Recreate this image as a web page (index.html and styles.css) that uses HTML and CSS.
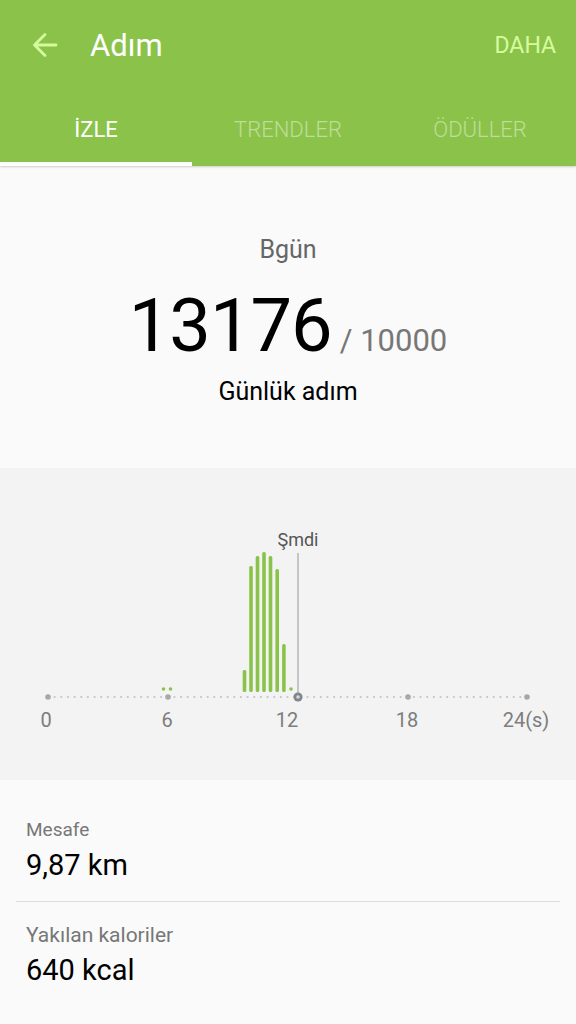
FILE: index.html
```html
<!DOCTYPE html>
<html lang="tr">
<head>
  <meta charset="UTF-8">
  <meta name="viewport" content="width=device-width, initial-scale=1.0">
  <title>Adım</title>
  <link rel="stylesheet" href="styles.css">
</head>
<body>

  <header class="appbar">
    <div class="titlebar">
      <svg class="back" width="28" height="28" viewBox="0 0 28 28">
        <path d="M25 14H4M14 3.5L3.5 14L14 24.5" fill="none" stroke="#d4fb9c" stroke-width="2.8" stroke-linecap="round" stroke-linejoin="round"/>
      </svg>
      <span class="title">Adım</span>
      <span class="more">DAHA</span>
    </div>
    <nav class="tabs">
      <div class="tab active">İZLE</div>
      <div class="tab">TRENDLER</div>
      <div class="tab">ÖDÜLLER</div>
    </nav>
  </header>

  <!-- Tagesziel -->
  <section class="summary">
    <div class="today">Bgün</div>
    <div class="count"><span class="steps">13176</span><span class="goal">/ 10000</span></div>
    <div class="label">Günlük adım</div>
  </section>

  <!-- Stundenverlauf -->
  <section class="chart">
    <svg width="576" height="312" viewBox="0 0 576 312">
      <line x1="48" y1="229" x2="527" y2="229" stroke="#c4c4c4" stroke-width="2.2" stroke-linecap="round" stroke-dasharray="0 6.653"/>
      <g fill="#a8a8a8">
        <circle cx="48" cy="229" r="2.8"/>
        <circle cx="168" cy="229" r="2.8"/>
        <circle cx="408" cy="229" r="2.8"/>
        <circle cx="527" cy="229" r="2.8"/>
      </g>
      <g fill="#8bc34a">
        <circle cx="163.5" cy="221" r="1.8"/>
        <circle cx="170.5" cy="221" r="1.8"/>
        <rect x="242.7" y="202" width="3.6" height="22" rx="1.5"/>
        <rect x="249.2" y="98" width="3.6" height="126" rx="1.5"/>
        <rect x="255.7" y="88" width="3.6" height="136" rx="1.5"/>
        <rect x="262.2" y="84" width="3.6" height="140" rx="1.5"/>
        <rect x="268.7" y="88" width="3.6" height="136" rx="1.5"/>
        <rect x="275.4" y="101" width="3.6" height="123" rx="1.5"/>
        <rect x="282.1" y="176" width="3.6" height="48" rx="1.5"/>
        <circle cx="291" cy="221" r="1.8"/>
      </g>
      <line x1="298" y1="85" x2="298" y2="229" stroke="#a9adb1" stroke-width="1.3"/>
      <circle cx="298" cy="229" r="4.6" fill="#7f878e"/>
      <circle cx="298" cy="229" r="1.8" fill="#d5d8da"/>
      <text x="298" y="78" class="now">Şmdi</text>
      <g class="axis">
        <text x="46" y="259">0</text>
        <text x="167" y="259">6</text>
        <text x="287" y="259">12</text>
        <text x="407" y="259">18</text>
        <text x="526" y="259">24(s)</text>
      </g>
    </svg>
  </section>

  <!-- Details -->
  <section class="details">
    <div class="item">
      <div class="item-label">Mesafe</div>
      <div class="item-value">9,87 km</div>
    </div>
    <div class="item">
      <div class="item-label wide">Yakılan kaloriler</div>
      <div class="item-value">640 kcal</div>
    </div>
  </section>

</body>
</html>
```

FILE: styles.css
```css
body {
  margin: 0;
  background-color: #fafafa;
  font-family: Roboto, "Noto Sans", sans-serif;
  color: #000;
}

.appbar {
  background: #8bc34a;
  box-shadow: 0 1px 2px rgba(0, 0, 0, 0.18);
}

.titlebar {
  height: 90px;
  display: flex;
  align-items: center;
  padding: 0 20px 0 31px;
}

.back {
  display: block;
}

.title {
  color: #fff;
  font-size: 31px;
  margin-left: 31px;
  flex: 1;
}

.more {
  color: #d7fb9f;
  font-size: 23px;
}

.tabs {
  display: flex;
  height: 76px;
}

.tab {
  flex: 1;
  display: flex;
  align-items: center;
  justify-content: center;
  padding-top: 6px;
  font-size: 22px;
  font-weight: 300;
  color: rgba(255, 255, 255, 0.45);
  border-bottom: 4px solid transparent;
}

.tab.active {
  color: #fff;
  font-weight: 400;
  border-bottom-color: #fff;
}

.summary {
  height: 302px;
  box-sizing: border-box;
  padding-top: 69px;
  text-align: center;
}

.today {
  font-size: 25px;
  line-height: 30px;
  color: #666;
}

.count {
  margin-top: 21px;
  line-height: 80px;
  height: 80px;
}

.steps {
  font-size: 74px;
  letter-spacing: -1px;
}

.goal {
  font-size: 31px;
  color: #777;
  margin-left: 8px;
}

.label {
  margin-top: 11px;
  font-size: 25px;
  line-height: 30px;
}

.chart {
  background: #f3f3f3;
  height: 312px;
}

.chart svg {
  display: block;
}

.now {
  font-family: Roboto, sans-serif;
  font-size: 18px;
  fill: #555;
  text-anchor: middle;
}

.axis text {
  font-family: Roboto, sans-serif;
  font-size: 20px;
  fill: #7d7d7d;
  text-anchor: middle;
}

.details {
  padding: 17px 16px 0 16px;
}

.item {
  padding: 20px 10px 19px 10px;
}

.item + .item {
  border-top: 1px solid #dcdcdc;
}

.item-label {
  font-size: 19px;
  line-height: 26px;
  color: #777;
}

.item-label.wide {
  font-size: 21px;
}

.item-value {
  margin-top: 5px;
  font-size: 29px;
  line-height: 34px;
}
```
